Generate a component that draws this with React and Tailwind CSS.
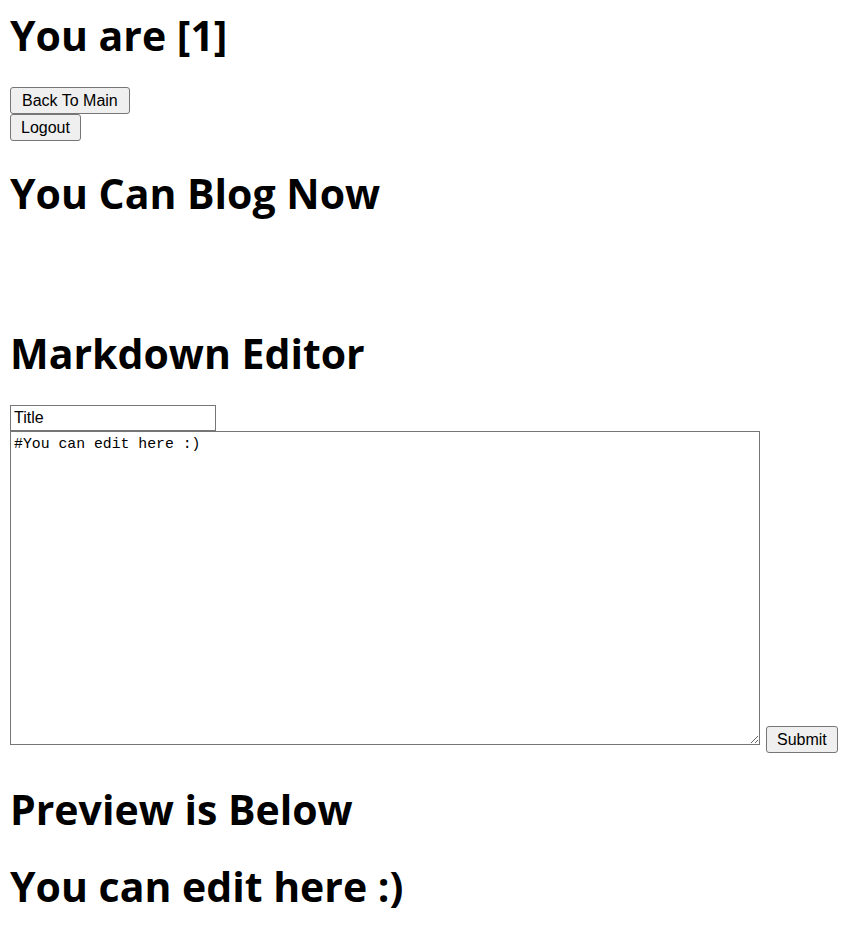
import { useState } from "react";

const headingClass =
  "font-['Open_Sans',sans-serif] text-[41px] leading-[50px] font-bold text-black";

const buttonClass =
  "block font-['Liberation_Sans',Arial,sans-serif] text-[16px] leading-[19px] text-black bg-[#efefef] border border-[#767676] rounded-[3px] px-[10px] py-[3px] hover:bg-[#e5e5e5]";

export default function App() {
  const [title, setTitle] = useState("Title");
  const [content, setContent] = useState("#You can edit here :)");

  return (
    <div className="min-h-[949px] bg-white pl-[10px] pt-[10px]">
      <h1 className={headingClass}>You are [1]</h1>

      <div className="mt-[27px] flex flex-col items-start">
        <button className={`${buttonClass} px-[11px]`}>Back To Main</button>
        <button className={buttonClass}>Logout</button>
      </div>

      <h1 className={`${headingClass} mt-[27px]`}>You Can Blog Now</h1>

      <h1 className={`${headingClass} mt-[110px]`}>Markdown Editor</h1>

      <input
        className="mt-[27px] block w-[206px] h-[26px] border border-[#767676] px-[3px] font-['Liberation_Sans',Arial,sans-serif] text-[16px] text-black bg-white"
        value={title}
        onChange={(e) => setTitle(e.target.value)}
      />
      <div className="flex items-end gap-[6px]">
        <textarea
          className="mb-[8px] w-[750px] h-[314px] border border-[#767676] px-[3px] pt-[4px] font-['Liberation_Mono',monospace] text-[14.8px] leading-[17px] text-black bg-white"
          value={content}
          onChange={(e) => setContent(e.target.value)}
        />
        <button className={buttonClass}>Submit</button>
      </div>

      <h1 className={`${headingClass} mt-[31px]`}>Preview is Below</h1>
      <h1 className={`${headingClass} mt-[27px]`}>You can edit here :)</h1>
    </div>
  );
}
